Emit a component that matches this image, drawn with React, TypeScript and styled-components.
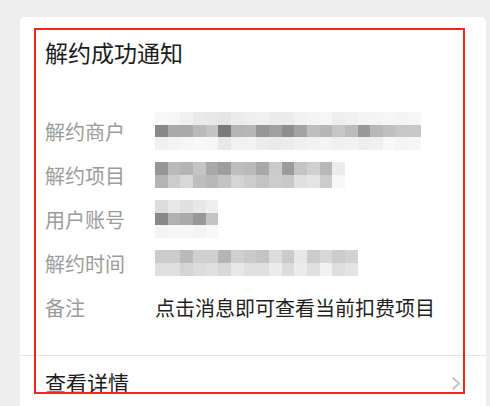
import * as React from 'react'
import styled, { createGlobalStyle } from 'styled-components'

const GlobalStyle = createGlobalStyle`
	html, body {
		margin: 0;
		padding: 0;
		background: #ededed;
		overflow: hidden;
	}
	body {
		font-family: "Noto Sans CJK SC", "Noto Sans", sans-serif;
	}
`

const Page = styled.div`
	padding: 17px 4px 0px 20px;
	height: 406px;
	box-sizing: border-box;
`

const Card = styled.div`
	position: relative;
	background: #ffffff;
	border-radius: 5px 5px 0px 0px;
	min-height: 400px;
`

const Highlight = styled.div`
	position: absolute;
	left: 14px;
	top: 11px;
	width: 431px;
	height: 366px;
	border: 2px solid #f2261d;
	box-sizing: border-box;
	pointer-events: none;
`

const Body = styled.div`
	padding: 20px 25px 26px 25px;
`

const Title = styled.div`
	font-size: 23px;
	line-height: 30px;
	color: #1b1b1b;
`

const Rows = styled.div`
	margin-top: 42px;
	display: flex;
	flex-direction: column;
`

const Row = styled.div`
	display: flex;
	align-items: center;
	height: 44px;
`

const Label = styled.div`
	width: 110px;
	flex-shrink: 0;
	font-size: 20px;
	color: #9b9b9b;
`

const Value = styled.div`
	font-size: 20px;
	color: #1f1f1f;
`

const Mosaic = styled.div<{ $cols: number }>`
	display: grid;
	grid-template-columns: repeat(${ props => props.$cols }, 12.67px);
	grid-auto-rows: 12.67px;
	filter: blur(0.5px);
`

const Cell = styled.div<{ $shade: number }>`
	background: ${ props => `rgb(${ props.$shade }, ${ props.$shade }, ${ props.$shade })` };
`

const Footer = styled.div`
	display: flex;
	align-items: center;
	justify-content: space-between;
	border-top: 1px solid #e6e6e6;
	height: 52px;
	padding: 0px 25px;
`

const FooterText = styled.div`
	font-size: 21px;
	color: #1b1b1b;
`

const Chevron = styled.svg`
	width: 10px;
	height: 15px;
	margin-top: 2px;
`

const merchant = [
	[ 248, 246, 240, 234, 232, 230, 236, 238, 240, 236, 236, 242, 244, 246, 238, 240, 244, 244, 246, 244, 246 ],
	[ 136, 170, 170, 186, 196, 122, 180, 182, 150, 160, 142, 162, 190, 182, 198, 188, 152, 184, 192, 200, 200 ],
	[ 240, 244, 246, 248, 246, 232, 242, 242, 236, 234, 236, 240, 242, 244, 240, 242, 238, 240, 248, 244, 246 ],
]

const project = [
	[ 150, 186, 180, 196, 168, 158, 190, 186, 168, 202, 156, 196, 208, 184, 236 ],
	[ 180, 204, 216, 190, 184, 196, 212, 204, 194, 204, 200, 224, 228, 204, 248 ],
]

const account = [
	[ 220, 232, 224, 232, 238 ],
	[ 136, 176, 170, 152, 196 ],
	[ 244, 246, 246, 244, 248 ],
]

const time = [
	[ 204, 204, 186, 208, 208, 180, 208, 202, 196, 220, 202, 232, 204, 216, 204, 210 ],
	[ 224, 224, 212, 220, 224, 216, 232, 224, 224, 236, 220, 236, 224, 242, 222, 228 ],
]

const Blurred = ( { cells }: { cells: number[][] } ) => (
	<Mosaic $cols={ cells[ 0 ].length }>
		{ cells.map( ( line, r ) =>
			line.map( ( shade, c ) => <Cell key={ `${ r }-${ c }` } $shade={ shade } /> )
		) }
	</Mosaic>
)

export default function App() {
	return (
		<Page>
			<GlobalStyle />
			<Card>
				<Body>
					<Title>解约成功通知</Title>
					<Rows>
						<Row>
							<Label>解约商户</Label>
							<Blurred cells={ merchant } />
						</Row>
						<Row>
							<Label>解约项目</Label>
							<Blurred cells={ project } />
						</Row>
						<Row>
							<Label>用户账号</Label>
							<Blurred cells={ account } />
						</Row>
						<Row>
							<Label>解约时间</Label>
							<Blurred cells={ time } />
						</Row>
						<Row>
							<Label>备注</Label>
							<Value>点击消息即可查看当前扣费项目</Value>
						</Row>
					</Rows>
				</Body>
				<Footer>
					<FooterText>查看详情</FooterText>
					<Chevron viewBox='0 0 10 15'>
						<polyline points='1.5,1.5 8,7.5 1.5,13.5' fill='none' stroke='#c4c4c4' strokeWidth='2' />
					</Chevron>
				</Footer>
				<Highlight />
			</Card>
		</Page>
	)
}
